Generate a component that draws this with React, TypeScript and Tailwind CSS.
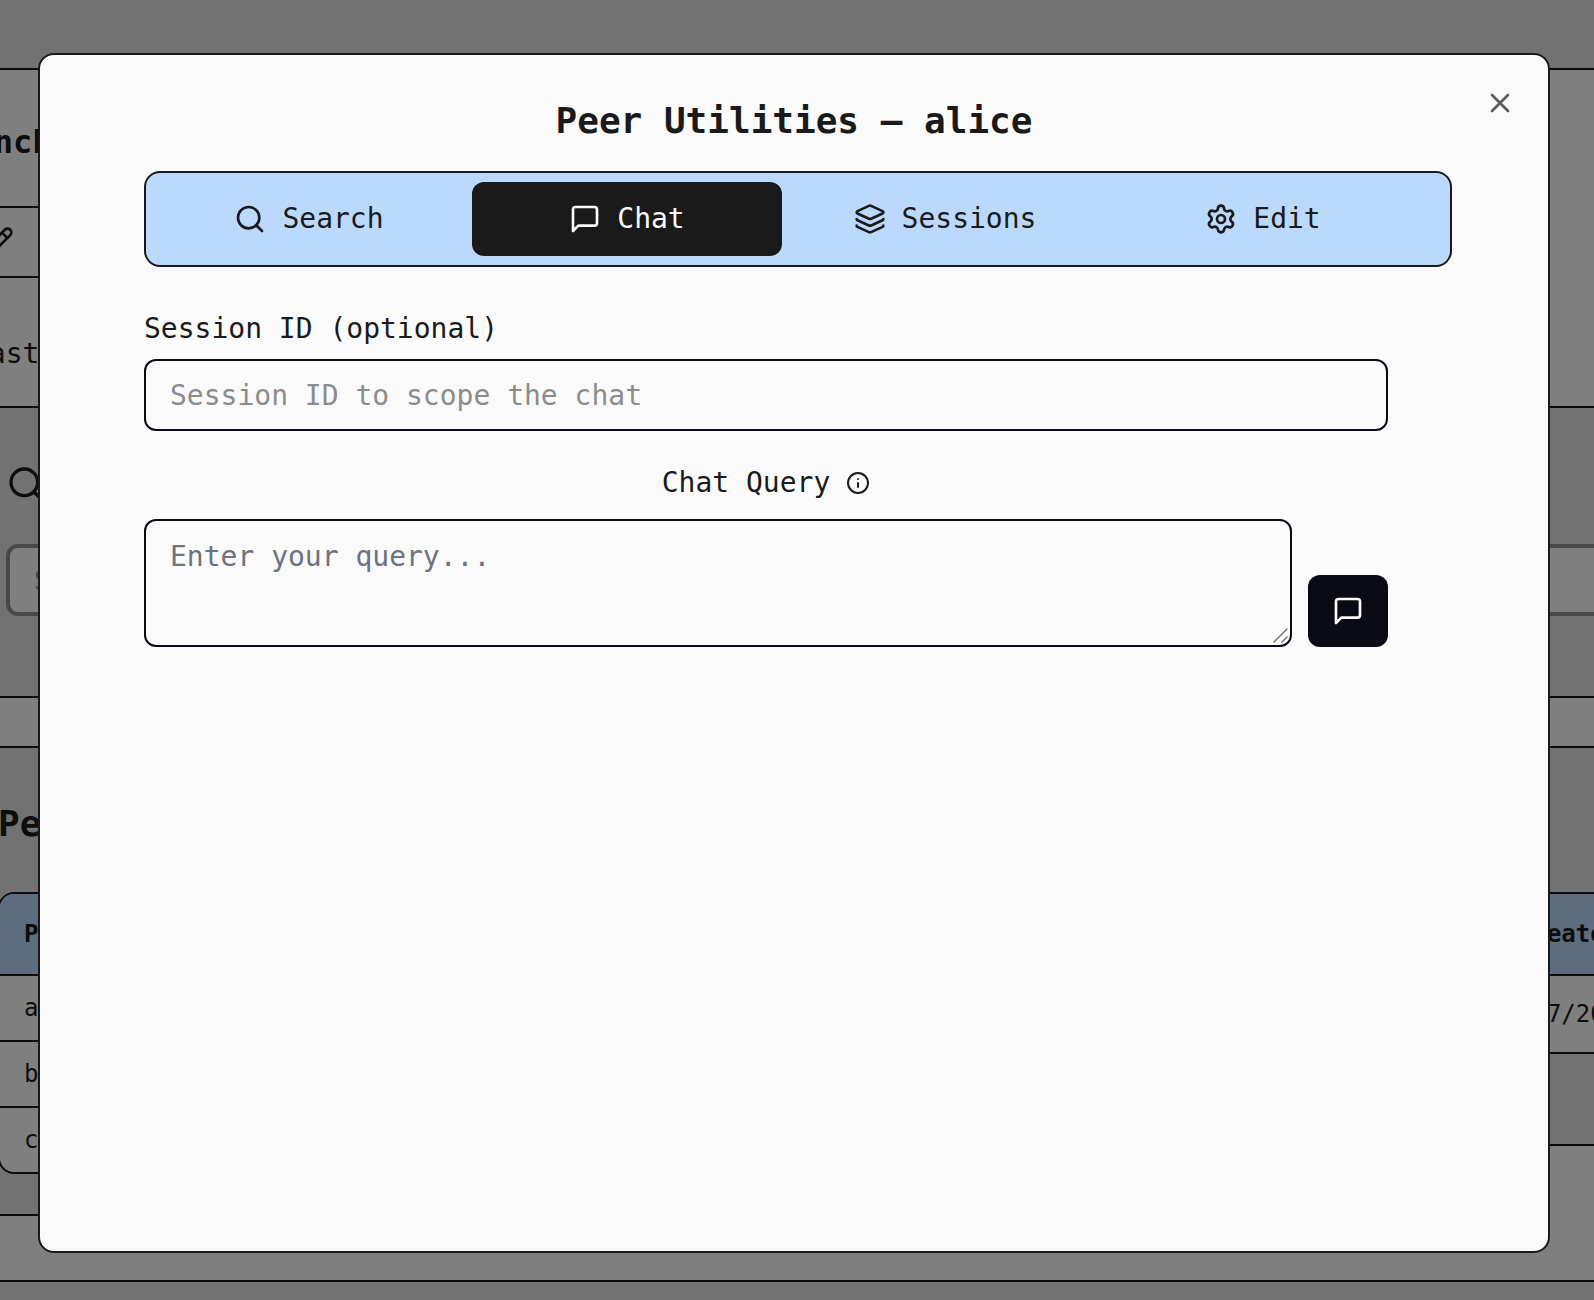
import { Info, Layers, Pencil, Search, Settings, X } from "lucide-react";
import type { ReactNode } from "react";

function ChatIcon() {
  return (
    <svg
      className="size-8 shrink-0"
      viewBox="0 0 24 24"
      fill="none"
      stroke="currentColor"
      strokeWidth="2"
      strokeLinecap="round"
      strokeLinejoin="round"
      aria-hidden="true"
    >
      <path d="M21 15a2 2 0 0 1-2 2H7l-4 4V5a2 2 0 0 1 2-2h14a2 2 0 0 1 2 2z" />
    </svg>
  );
}

function ResizeGrip() {
  return (
    <svg
      className="pointer-events-none absolute right-1 bottom-1 size-4"
      viewBox="0 0 16 16"
      fill="none"
      stroke="#6b6b6b"
      strokeWidth="1.4"
      strokeLinecap="round"
      aria-hidden="true"
    >
      <path d="M2 15 15 2M10 15l5-5" />
    </svg>
  );
}

function Tab({ icon, label, active = false }: { icon: ReactNode; label: string; active?: boolean }) {
  return (
    <button
      type="button"
      role="tab"
      aria-selected={active}
      className={
        active
          ? "flex h-[74px] items-center justify-center gap-4 rounded-xl bg-[#1a1a1a] text-[#fafafa]"
          : "flex h-[74px] items-center justify-center gap-4 rounded-xl text-[#1a1a1a]"
      }
    >
      {icon}
      {label}
    </button>
  );
}

function PageBehind() {
  return (
    <div className="-mx-16" aria-hidden="true">
      <header className="h-17" />

      <section className="border-y-2 border-[#1a1a1a] bg-white">
        <div className="w-1/2">
          <div className="border-b-2 border-[#1a1a1a] pt-14 pb-12">
            <h1 className="text-[32px] leading-8 font-bold">Launch</h1>
          </div>
          <div className="flex h-[70px] items-center border-b-2 border-[#1a1a1a] pl-[46px]">
            <Pencil className="size-8" />
          </div>
          <p className="pt-14 pb-8 pl-9 leading-10">Last</p>
        </div>
      </section>

      <section className="px-[70px] pt-14 pb-20">
        <Search className="size-10" />
        <input
          type="text"
          tabIndex={-1}
          aria-label="Search workspace"
          placeholder="Search"
          className="mt-10 block h-18 w-[110%] rounded-xl border-4 border-[#909090] bg-white px-6 placeholder:text-[#909090]"
        />
      </section>

      <div className="h-13 border-y-2 border-[#1a1a1a] bg-white" />

      <section className="flex items-start justify-between border-b-2 border-[#1a1a1a] bg-white pb-16">
        <div className="flex-1 border-b-2 border-[#1a1a1a] bg-[#e5e5e5] pt-14 pb-10 pl-[62px]">
          <h2 className="mb-12 text-4xl leading-10 font-bold">Peers</h2>
          <div className="overflow-hidden rounded-2xl border-2 border-[#1a1a1a] bg-white text-2xl leading-8">
            <table className="w-full border-separate border-spacing-0 text-left">
              <thead>
                <tr>
                  <th className="border-b-2 border-[#1a1a1a] bg-[#bbd9fc] px-6 py-6">Peer</th>
                </tr>
              </thead>
              <tbody>
                <tr>
                  <td className="border-b-2 border-[#1a1a1a] px-6 py-4">alice</td>
                </tr>
                <tr>
                  <td className="border-b-2 border-[#1a1a1a] px-6 py-4">bob</td>
                </tr>
                <tr>
                  <td className="px-6 py-4">carol</td>
                </tr>
              </tbody>
            </table>
          </div>
        </div>
        <div className="w-41 border-b-2 border-[#1a1a1a] bg-[#e5e5e5] pt-36 pb-[90px]">
          <table className="w-full border-separate border-spacing-0 border-y-2 border-[#1a1a1a] bg-white text-left text-2xl leading-8 whitespace-nowrap">
            <thead>
              <tr>
                <th className="border-b-2 border-[#1a1a1a] bg-[#bbd9fc] py-6 pl-6">Created</th>
              </tr>
            </thead>
            <tbody>
              <tr>
                <td className="py-[22px] pl-6">7/7/2025</td>
              </tr>
            </tbody>
          </table>
        </div>
      </section>
    </div>
  );
}

export default function App() {
  return (
    <div className="relative min-h-screen overflow-hidden bg-[#e5e5e5] font-['DejaVu_Sans_Mono',monospace] text-[28px] leading-7 text-[#1a1a1a]">
      <PageBehind />

      <div className="fixed inset-0 flex bg-black/50 pt-[53px] pr-11 pb-[47px] pl-[38px]">
        <div
          role="dialog"
          aria-modal="true"
          aria-labelledby="dialog-title"
          className="relative flex-1 overflow-hidden rounded-2xl border-2 border-[#1a1a1a] bg-[#fafafa] pt-12"
        >
          <h2 id="dialog-title" className="text-center text-4xl leading-9 font-bold">
            Peer Utilities – alice
          </h2>
          <button type="button" aria-label="Close" className="absolute top-8 right-8 opacity-70">
            <X className="size-8" />
          </button>

          <div className="mt-8 mr-24 ml-26">
            <div
              role="tablist"
              className="grid h-24 grid-cols-4 items-center gap-2 rounded-2xl border-2 border-[#1a1a1a] bg-[#bbd9fc] pr-8 pl-2"
            >
              <Tab icon={<Search className="size-8" />} label="Search" />
              <Tab icon={<ChatIcon />} label="Chat" active />
              <Tab icon={<Layers className="size-8" />} label="Sessions" />
              <Tab icon={<Settings className="size-8" />} label="Edit" />
            </div>

            <form className="mt-12 pr-16">
              <label htmlFor="session-id" className="block">
                Session ID (optional)
              </label>
              <input
                id="session-id"
                type="text"
                placeholder="Session ID to scope the chat"
                className="mt-4 block h-18 w-full rounded-xl border-2 border-[#0a0a14] bg-transparent px-6 placeholder:text-[#8c8c8c]"
              />

              <div className="mt-8 flex h-10 items-center justify-center gap-4">
                <label htmlFor="chat-query">Chat Query</label>
                <Info className="size-6" />
              </div>
              <div className="mt-4 flex items-end gap-4">
                <div className="relative flex-1">
                  <textarea
                    id="chat-query"
                    placeholder="Enter your query..."
                    className="block h-32 w-full resize-none rounded-xl border-2 border-[#0a0a14] bg-transparent px-6 py-4 leading-10 placeholder:text-[#6b7280]"
                  />
                  <ResizeGrip />
                </div>
                <button
                  type="button"
                  aria-label="Send query"
                  className="flex h-18 w-20 items-center justify-center rounded-xl bg-[#0a0a14] text-[#fafafa]"
                >
                  <ChatIcon />
                </button>
              </div>
            </form>
          </div>
        </div>
      </div>
    </div>
  );
}
